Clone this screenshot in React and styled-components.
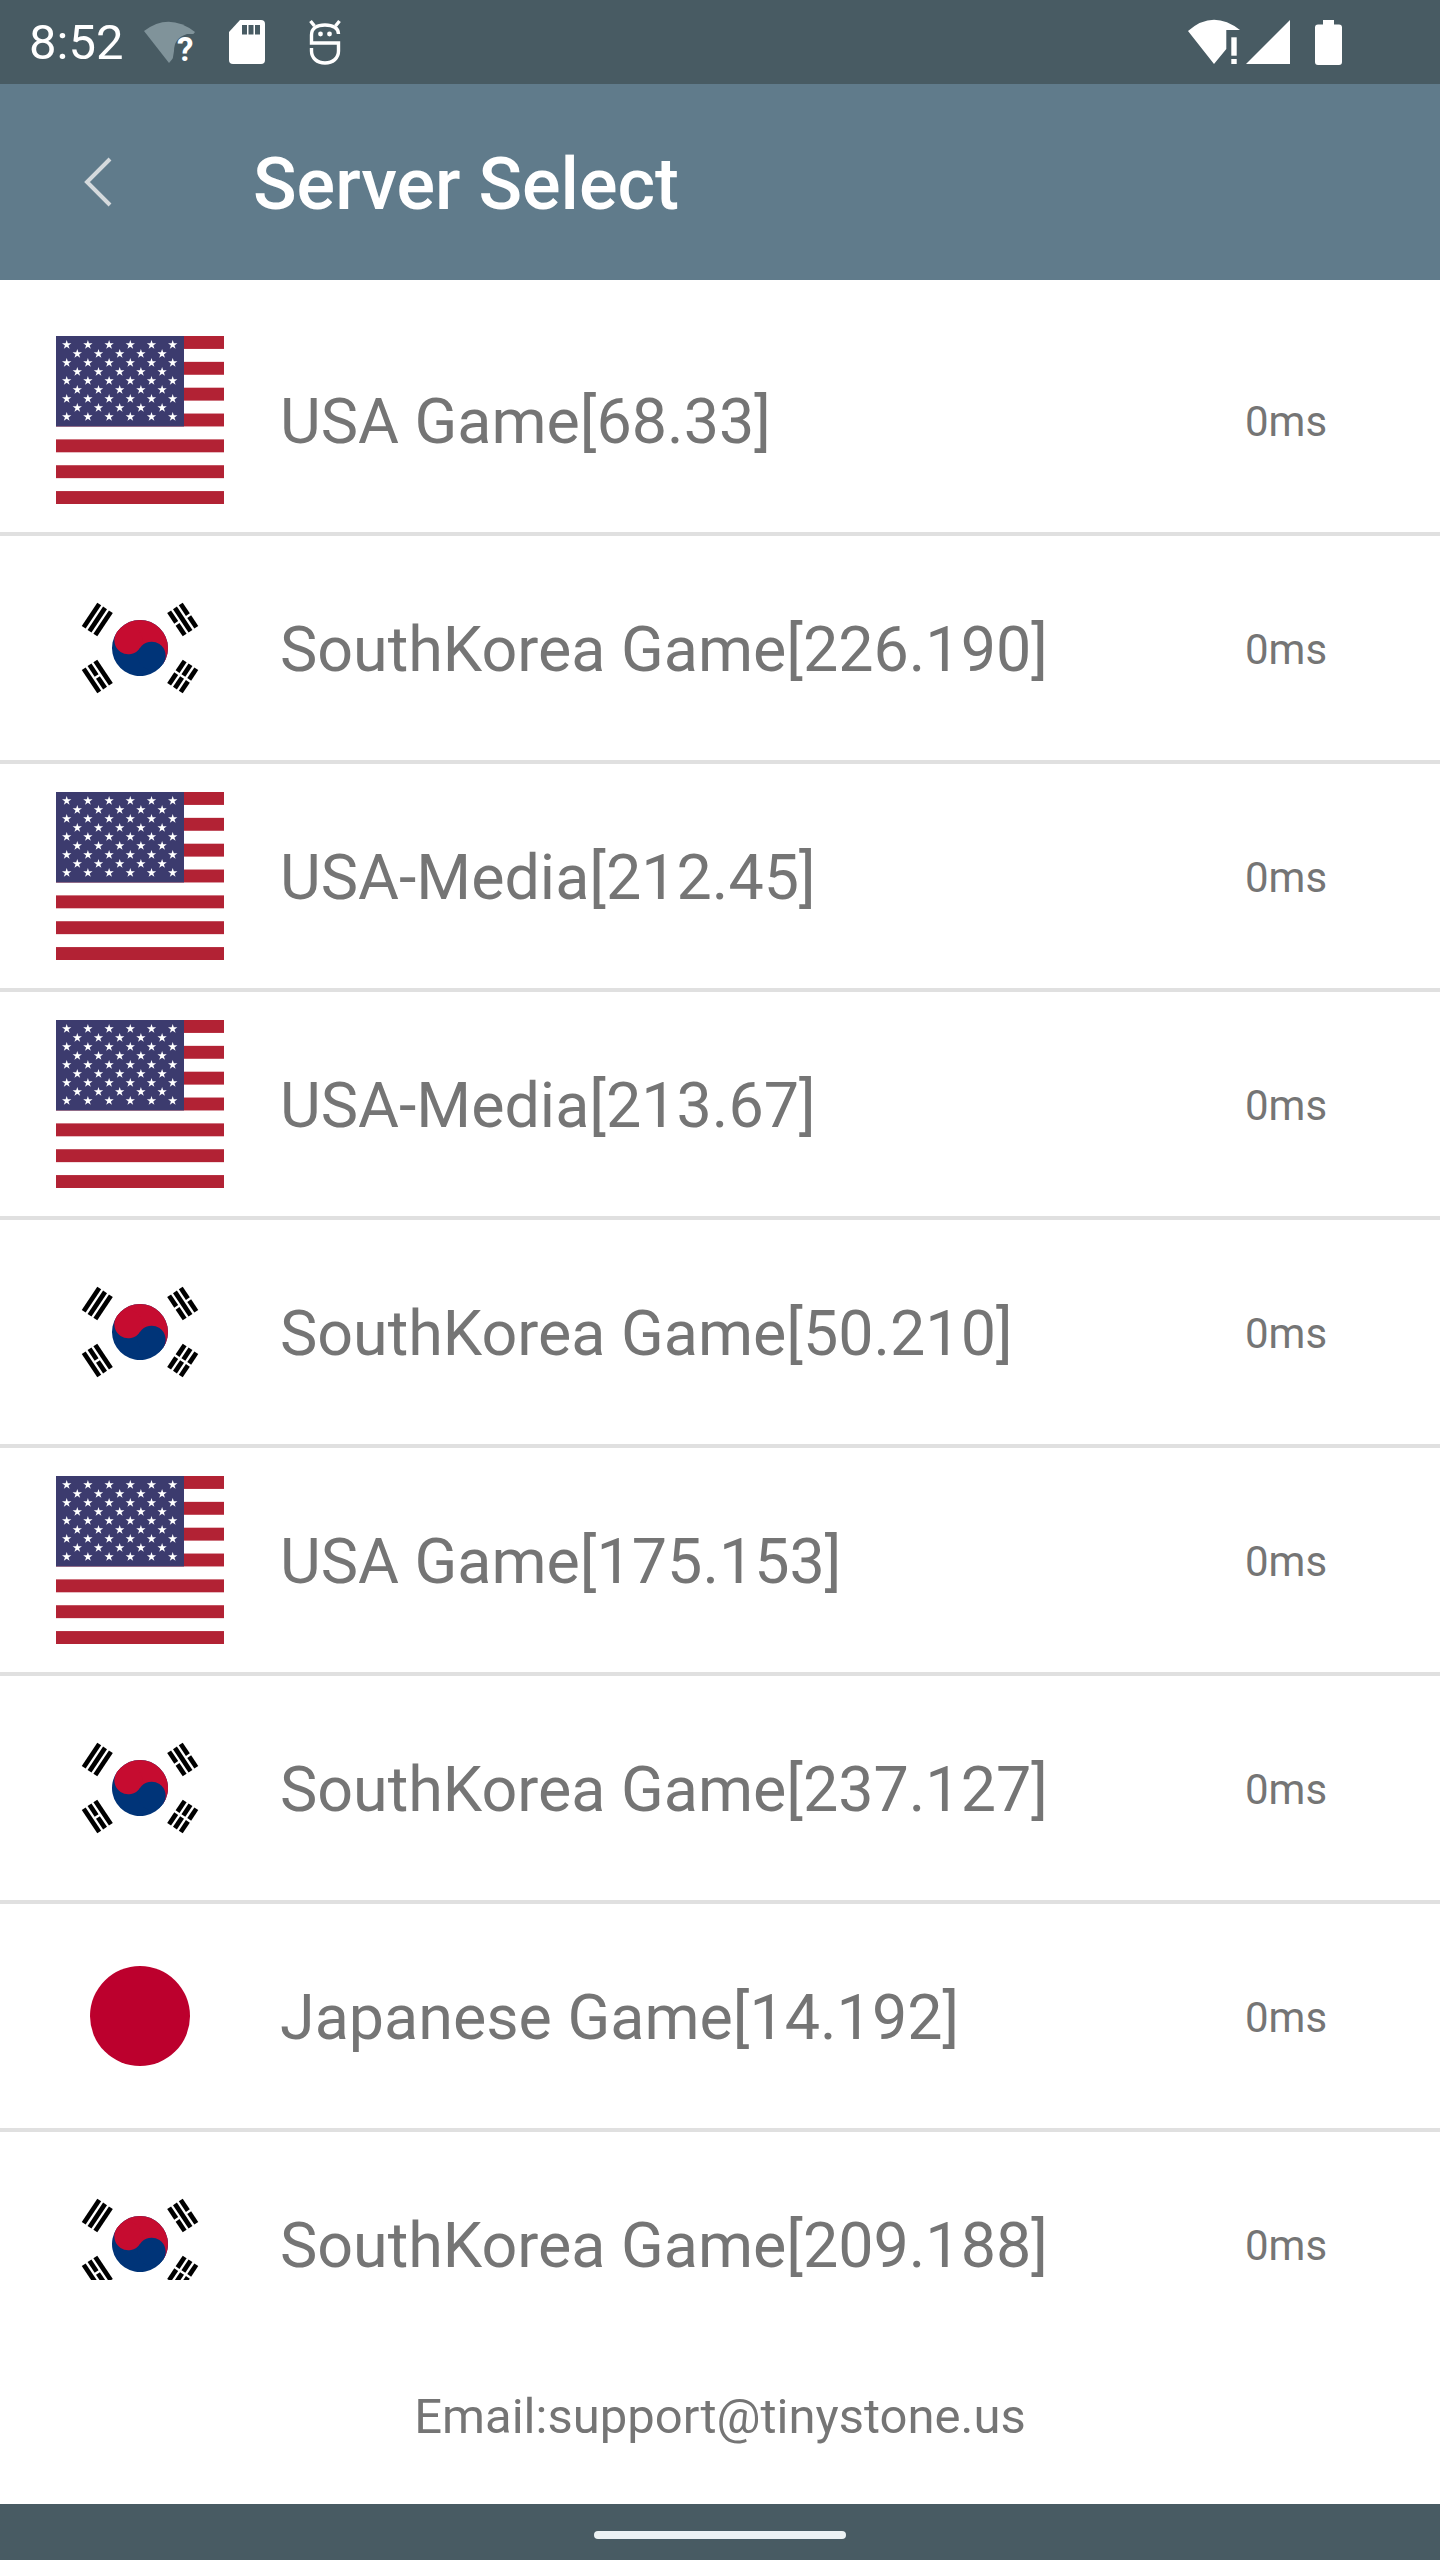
import React from 'react';
import styled, { createGlobalStyle } from 'styled-components';

const Global = createGlobalStyle`
  html, body { margin: 0; padding: 0; background: #fff; }
  * { box-sizing: border-box; }
`;

const Page = styled.div`
  width: 1440px;
  height: 2560px;
  display: flex;
  flex-direction: column;
  font-family: Roboto, "Liberation Sans", sans-serif;
  background: #fff;
  overflow: hidden;
`;

const StatusBar = styled.div`
  height: 84px;
  flex: none;
  background: #485b63;
  display: flex;
  align-items: center;
  justify-content: space-between;
  padding: 0 98px 0 29px;
  color: #fff;
`;
const StatusGroup = styled.div`
  display: flex;
  align-items: center;
`;
const Time = styled.span`
  font-size: 49px;
  width: 115px;
`;
const StatusIcon = styled.svg`
  display: block;
  flex: none;
  overflow: visible;
  margin-left: ${p => p.$ml || 0}px;
`;

const Header = styled.header`
  height: 196px;
  flex: none;
  background: #607b8b;
  display: flex;
  align-items: center;
`;
const BackSlot = styled.div`
  width: 253px;
  padding-left: 84px;
  flex: none;
  display: flex;
  align-items: center;
`;
const Title = styled.h1`
  margin: 0;
  padding-top: 4px;
  font-size: 72px;
  font-weight: 500;
  color: #fff;
`;

const List = styled.div`
  flex: 1;
  min-height: 0;
  overflow: hidden;
`;
const Row = styled.div`
  display: flex;
  align-items: center;
  padding: ${p => (p.$first ? '56px' : '28px')} 0 28px 56px;
  border-bottom: 4px solid #e0e0e0;
`;
const FlagBox = styled.svg`
  display: block;
  width: 168px;
  height: 168px;
  flex: none;
`;
const Name = styled.span`
  margin-left: 56px;
  padding-top: 2px;
  width: 965px;
  flex: none;
  font-size: 62.8px;
  color: #757575;
  white-space: nowrap;
`;
const Ping = styled.span`
  padding-top: 2px;
  font-size: 42px;
  color: #757575;
`;

const Footer = styled.footer`
  height: 224px;
  flex: none;
  padding-top: 105px;
  text-align: center;
  font-size: 49px;
  line-height: 64px;
  color: #757575;
`;

const NavBar = styled.div`
  height: 56px;
  flex: none;
  background: #485b63;
  display: flex;
  justify-content: center;
  padding-top: 27px;
`;
const NavPill = styled.div`
  width: 252px;
  height: 8px;
  border-radius: 4px;
  background: #ecf2f4;
`;

const starPoints = (cx, cy, R) => {
  const r = R * 0.382;
  const pts = [];
  for (let i = 0; i < 10; i++) {
    const a = -Math.PI / 2 + (i * Math.PI) / 5;
    const rad = i % 2 ? r : R;
    pts.push(`${(cx + rad * Math.cos(a)).toFixed(2)},${(cy + rad * Math.sin(a)).toFixed(2)}`);
  }
  return pts.join(' ');
};

const UsaFlag = () => {
  const stripe = 168 / 13;
  const stars = [];
  for (let r = 0; r < 9; r++) {
    const n = r % 2 ? 5 : 6;
    for (let c = 0; c < n; c++) {
      const x = (r % 2 ? 21.3 : 10.7) + c * 21.2;
      const y = 8.8 + r * 9;
      stars.push(<polygon key={`${r}-${c}`} points={starPoints(x, y, 4.9)} fill="#fff" />);
    }
  }
  return (
    <FlagBox viewBox="0 0 168 168">
      <rect width="168" height="168" fill="#fff" />
      {Array.from({ length: 7 }, (_, i) => (
        <rect key={i} x="0" y={i * 2 * stripe} width="168" height={stripe} fill="#b22234" />
      ))}
      <rect width="128" height={stripe * 7} fill="#3c3b6e" />
      {stars}
    </FlagBox>
  );
};

const Trigram = ({ angle, pattern }) => {
  const L = 28;
  const t = 4.67;
  const g = 2.33;
  return (
    <g transform={`rotate(${angle})`}>
      {pattern.map((broken, i) => {
        const x = 42 + i * (t + g);
        return broken ? (
          <g key={i}>
            <rect x={x} y={-L / 2} width={t} height={L / 2 - 1.2} fill="#000" />
            <rect x={x} y={1.2} width={t} height={L / 2 - 1.2} fill="#000" />
          </g>
        ) : (
          <rect key={i} x={x} y={-L / 2} width={t} height={L} fill="#000" />
        );
      })}
    </g>
  );
};

const KoreaFlag = () => (
  <FlagBox viewBox="0 0 168 168">
    <g transform="translate(84 84)">
      <g transform="rotate(33.69)">
        <circle r="28" fill="#003478" />
        <path d="M-28 0A28 28 0 0 1 28 0Z" fill="#c60c30" />
        <circle cx="-14" r="14" fill="#c60c30" />
        <circle cx="14" r="14" fill="#003478" />
      </g>
      <Trigram angle={213.69} pattern={[false, false, false]} />
      <Trigram angle={326.31} pattern={[true, false, true]} />
      <Trigram angle={146.31} pattern={[false, true, false]} />
      <Trigram angle={33.69} pattern={[true, true, true]} />
    </g>
  </FlagBox>
);

const JapanFlag = () => (
  <FlagBox viewBox="0 0 168 168">
    <circle cx="84" cy="84" r="50" fill="#bc002d" />
  </FlagBox>
);

const flags = { us: UsaFlag, kr: KoreaFlag, jp: JapanFlag };

const servers = [
  ['us', 'USA Game[68.33]'],
  ['kr', 'SouthKorea Game[226.190]'],
  ['us', 'USA-Media[212.45]'],
  ['us', 'USA-Media[213.67]'],
  ['kr', 'SouthKorea Game[50.210]'],
  ['us', 'USA Game[175.153]'],
  ['kr', 'SouthKorea Game[237.127]'],
  ['jp', 'Japanese Game[14.192]'],
  ['kr', 'SouthKorea Game[209.188]'],
];

export default function App() {
  return (
    <Page>
      <Global />
      <StatusBar>
        <StatusGroup>
          <Time>8:52</Time>
          <StatusIcon width="52" height="42" viewBox="0 0 52 42">
            <path d="M0 10Q25-9 51 11L25 42Z" fill="#80939a" />
            <path d="M30 30Q30 17 43 13L52 13V42H28Z" fill="#485b63" />
            <text x="33" y="40" fontSize="33" fontWeight="700" fill="#fff" fontFamily="Roboto">?</text>
          </StatusIcon>
          <StatusIcon $ml={33} width="36" height="44" viewBox="0 0 36 44">
            <path d="M11 0H32Q36 0 36 4V40Q36 44 32 44H4Q0 44 0 40V12Z" fill="#fff" />
            <rect x="13" y="5" width="5" height="9.500" fill="#485b63" />
            <rect x="19.500" y="5" width="5" height="9.500" fill="#485b63" />
            <rect x="26" y="5" width="5" height="9.500" fill="#485b63" />
          </StatusIcon>
          <StatusIcon $ml={44} width="32" height="46" viewBox="0 0 32 46">
            <g fill="none" stroke="#fff" strokeWidth="3.4">
              <path d="M1.500 2L5.500 7M30.500 2L26.500 7" />
              <path d="M29.500 15C29.500 9 24 6 16 6S2.500 9 2.500 16V24H29.500V32C29.500 39 24 44 16 44S2.500 39 2.500 32V29" />
            </g>
            <circle cx="11.500" cy="15" r="2.400" fill="#fff" />
            <circle cx="20.500" cy="15" r="2.400" fill="#fff" />
          </StatusIcon>
        </StatusGroup>
        <StatusGroup>
          <StatusIcon width="52" height="44" viewBox="0 0 52 44">
            <path d="M0 11Q25-11 52 10H38.300V29L26 44Z" fill="#fff" />
            <rect x="43.300" y="17.300" width="5.400" height="18.400" fill="#fff" />
            <rect x="43.300" y="39" width="5.400" height="5" fill="#fff" />
          </StatusIcon>
          <StatusIcon $ml={6} width="44" height="44" viewBox="0 0 44 44">
            <path d="M44 0V44H0Z" fill="#fff" />
          </StatusIcon>
          <StatusIcon $ml={25} width="27" height="45" viewBox="0 0 27 45">
            <path d="M8 0H19V4.500H24Q27 4.500 27 7.500V42Q27 45 24 45H3Q0 45 0 42V7.500Q0 4.500 3 4.500H8Z" fill="#fff" />
          </StatusIcon>
        </StatusGroup>
      </StatusBar>
      <Header>
        <BackSlot>
          <svg width="28" height="50" viewBox="0 0 28 50" fill="none">
            <path d="M26 2L3 25L26 48" stroke="#d5dadd" strokeWidth="4" />
          </svg>
        </BackSlot>
        <Title>Server Select</Title>
      </Header>
      <List>
        {servers.map(([flag, name], i) => {
          const Flag = flags[flag];
          return (
            <Row key={i} $first={i === 0}>
              <Flag />
              <Name>{name}</Name>
              <Ping>0ms</Ping>
            </Row>
          );
        })}
      </List>
      <Footer>Email:support@tinystone.us</Footer>
      <NavBar>
        <NavPill />
      </NavBar>
    </Page>
  );
}
